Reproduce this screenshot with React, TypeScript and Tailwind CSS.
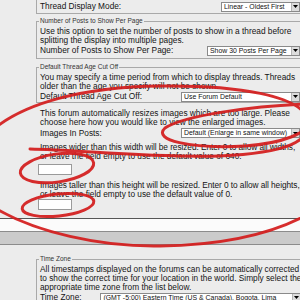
import React from "react";

// Small dropdown box drawn the way the old forum control panel renders it
function FakeSelect({ label, width }: { label: string; width: string }) {
  return (
    <div className={`flex h-[10px] items-center border border-[#8a8a8a] bg-white ${width}`}>
      <span className="flex-1 overflow-hidden whitespace-nowrap pl-[2px] text-[6.9px] leading-[8px] text-[#111]">
        {label}
      </span>
      <span className="flex h-full w-[8px] shrink-0 items-center justify-center border-l border-[#b5b5b5] bg-[#dcdcdc]">
        <svg width="5" height="3" viewBox="0 0 5 3">
          <polygon points="0,0 5,0 2.5,3" fill="#000" />
        </svg>
      </span>
    </div>
  );
}

function Line({ children, tight }: { children: React.ReactNode; tight?: boolean }) {
  return (
    <div className={`h-[9px] whitespace-nowrap leading-[9px] ${tight ? "tracking-[-0.06px]" : ""}`}>{children}</div>
  );
}

function Row({ label, select }: { label: string; select: React.ReactNode }) {
  return (
    <div className="flex h-[11px] items-center justify-between whitespace-nowrap">
      <span className="leading-[9px]">{label}</span>
      {select}
    </div>
  );
}

function Box({ legend, children, className }: { legend: string; children: React.ReactNode; className?: string }) {
  return (
    <fieldset className={`w-[268px] border border-[#a9a9a9] px-[3px] ${className ?? ""}`}>
      <legend className="-ml-[1px] px-[1px] text-[6.5px] leading-[8px] text-[#333]">{legend}</legend>
      {children}
    </fieldset>
  );
}

export default function App() {
  return (
    <div
      className="relative h-[300px] w-[300px] overflow-hidden bg-[#ececec] text-[8.3px] text-[#141414]"
      style={{ fontFamily: '"Liberation Sans", Arial, sans-serif' }}
    >
      <div className="pl-[36px]">
        {/* Thread display mode (top cut off) */}
        <div className="h-[14px] w-[268px] border-x border-b border-[#a9a9a9] px-[3px] pt-[1px]">
          <Row label="Thread Display Mode:" select={<FakeSelect label="Linear - Oldest First" width="w-[79px]" />} />
        </div>

        <Box legend="Number of Posts to Show Per Page" className="mt-[3px] pt-[2px] pb-[2px]">
          <Line>Use this option to set the number of posts to show in a thread before</Line>
          <Line>splitting the display into multiple pages.</Line>
          <Row label="Number of Posts to Show Per Page:" select={<FakeSelect label="Show 30 Posts Per Page" width="w-[93px]" />} />
        </Box>

        <Box legend="Default Thread Age Cut Off" className="mt-[4px] pt-[2px]">
          <Line>You may specify a time period from which to display threads. Threads</Line>
          <Line>older than the age you specify will not be shown.</Line>
          <Row label="Default Thread Age Cut Off:" select={<FakeSelect label="Use Forum Default" width="w-[119px]" />} />
        </Box>

        {/* Image resizing options */}
        <div className="mt-[6px] w-[268px] px-[4px]">
          <Line>This forum automatically resizes images which are too large. Please</Line>
          <Line>choose here how you would like to view the enlarged images.</Line>
          <div className="flex h-[12px] items-center justify-between whitespace-nowrap">
            <span>Images In Posts:</span>
            <FakeSelect label="Default (Enlarge in same window)" width="w-[119px]" />
          </div>
          <div className="mt-[4px]">
            <Line tight>Images wider than this width will be resized. Enter 0 to allow all widths,</Line>
            <Line>or leave the field empty to use the default value of 640.</Line>
          </div>
          <div className="mt-[3px] h-[11px] w-[34px] -ml-[2px] border border-[#9a9a9a] bg-white" />
          <div className="mt-[6px]">
            <Line tight>Images taller than this height will be resized. Enter 0 to allow all heights,</Line>
            <Line>or leave the field empty to use the default value of 0.</Line>
          </div>
          <div className="h-[11px] w-[34px] -ml-[2px] border border-[#9a9a9a] bg-white" />
        </div>
      </div>

      {/* Separator bands */}
      <div className="mt-[8px] h-[13px] border-t border-[#555] bg-[#fbfbfb]" />
      <div className="h-[14px] border-y border-[#8c8c8c] bg-[#cbcbcb]" />

      <div className="pl-[36px]">
        <Box legend="Time Zone" className="mt-[10px] pt-[2px]">
          <Line>All timestamps displayed on the forums can be automatically corrected</Line>
          <Line>to show the correct time for your location in the world. Simply select the</Line>
          <Line>appropriate time zone from the list below.</Line>
          <Row
            label="Time Zone:"
            select={<FakeSelect label="(GMT -5:00) Eastern Time (US & Canada), Bogota, Lima" width="w-[201px]" />}
          />
        </Box>
      </div>

      {/* Red hand-drawn markup */}
      <svg className="pointer-events-none absolute left-0 top-0" width="300" height="300" viewBox="0 0 300 300">
        <g fill="none" stroke="#d41c1c" strokeWidth="3" strokeLinecap="round" opacity="0.92">
          <path d="M -5 128 C 25 104, 80 87, 160 86 C 240 85, 298 96, 308 118 C 314 142, 285 153, 220 156 C 150 158, 80 150, 30 149" />
          <path d="M 305 104 C 255 106, 185 115, 165 128 C 152 140, 190 149, 245 146 C 285 143, 306 133, 310 122" />
          <ellipse cx="57" cy="168" rx="37" ry="14" transform="rotate(-8 57 168)" />
          <ellipse cx="58" cy="205" rx="36" ry="11" transform="rotate(-6 58 205)" />
          <path d="M -5 208 C 35 232, 100 247, 160 246 C 225 245, 275 233, 310 213" />
        </g>
      </svg>
    </div>
  );
}
